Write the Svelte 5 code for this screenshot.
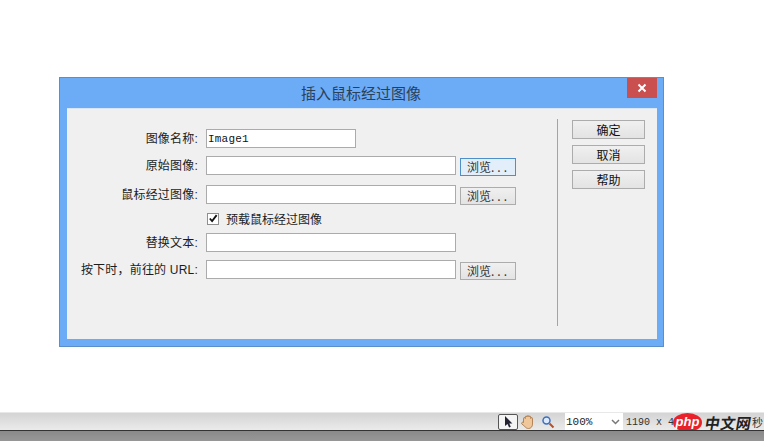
<script>
  const rows = [
    { label: '图像名称:', value: 'Image1', short: true, browse: false },
    { label: '原始图像:', value: '', browse: true, focus: true },
    { label: '鼠标经过图像:', value: '', browse: true },
    { check: '预载鼠标经过图像' },
    { label: '替换文本:', value: '', browse: false },
    { label: '按下时\uFF0C前往的 URL:', value: '', browse: true }
  ];
</script>

<div class="page">
  <section class="dialog">
    <header class="titlebar">
      <h1>插入鼠标经过图像</h1>
      <button class="close" aria-label="关闭">
        <svg width="10" height="10" viewBox="0 0 10 10"><path d="M1.5 1.5l7 7M8.5 1.5l-7 7" stroke="#fff" stroke-width="2" fill="none"/></svg>
      </button>
    </header>
    <div class="body">
      <div class="form">
        {#each rows as r}
          {#if r.check}
            <div class="checkrow">
              <span class="box">
                <svg width="11" height="11" viewBox="0 0 11 11"><path d="M2 5.500l2.500 2.800L9.500 1.800" stroke="#111" stroke-width="2" fill="none"/></svg>
              </span>
              <span>{r.check}</span>
            </div>
          {:else}
            <div class="row">
              <span class="label">{r.label}</span>
              <span class="input" class:short={r.short}>{r.value}</span>
              {#if r.browse}<button class="browse" class:focus={r.focus}>浏览<span class="dots">...</span></button>{/if}
            </div>
          {/if}
        {/each}
      </div>
      <div class="divider"></div>
      <div class="actions">
        <button>确定</button>
        <button>取消</button>
        <button>帮助</button>
      </div>
    </div>
  </section>

  <footer class="status">
    <div class="tools">
      <span class="tool active">
        <svg width="12" height="14" viewBox="0 0 12 14"><path d="M3 1v10l2.500-2 1.600 3.600 1.700-.8L7.300 8.400H10.400z" fill="#223"/></svg>
      </span>
      <span class="tool">
        <svg width="16" height="16" viewBox="0 0 16 16"><path d="M3.500 8.500V4.500a.9.9 0 0 1 1.800 0V3a.9.9 0 0 1 1.800 0v-.5a.9.9 0 0 1 1.800 0V3a.9.9 0 0 1 1.800 0v1.500a.9.9 0 0 1 1.800 0v5.500c0 2.800-1.700 4.500-4 4.500-1.800 0-2.900-.8-3.800-2.200L1.700 9.800c-.7-1.100.9-2.200 1.800-1.300z" fill="#f0c79a" stroke="#a5713f" stroke-width=".8"/></svg>
      </span>
      <span class="tool">
        <svg width="14" height="14" viewBox="0 0 14 14"><circle cx="5.500" cy="5.500" r="3.500" fill="#dbe9fa" stroke="#3c6fc0" stroke-width="1.500"/><path d="M8.500 8.500l4 4" stroke="#b5502a" stroke-width="2"/></svg>
      </span>
    </div>
    <div class="zoom"><span>100%</span><svg width="9" height="6" viewBox="0 0 9 6"><path d="M1 1l3.500 3.500L8 1" stroke="#777" stroke-width="1.500" fill="none"/></svg></div>
    <span class="size">1190 x 4</span>
    <span class="secs">秒</span>
    <div class="mark"><span class="php">php</span><span class="cn">中文网</span></div>
  </footer>
  <div class="bottom"></div>
</div>

<style>
  :global(body) { margin: 0; background: #fff; }
  .page { width: 764px; height: 441px; position: relative; overflow: hidden; padding-top: 77px; box-sizing: border-box; font-family: "Liberation Sans", "Noto Sans CJK SC", sans-serif; font-size: 12px; color: #1c1c1c; }
  .dialog { margin-left: 59px; width: 605px; height: 270px; box-sizing: border-box; background: #6cabf6; border: 1px solid #5a8fca; padding: 0 6px 7px 7px; display: flex; flex-direction: column; }
  .titlebar { height: 30px; flex: none; display: flex; justify-content: center; align-items: center; position: relative; }
  h1 { margin: 0 2px 1px 0; font-size: 15px; font-weight: 400; color: #2b3f56; font-family: "Noto Sans CJK SC", sans-serif; }
  .close { position: absolute; right: 0; top: 0; width: 30px; height: 20px; padding: 0; border: 0; background: #c9504f; display: flex; align-items: center; justify-content: center; }
  .body { flex: 1; background: #f0f0f0; display: flex; border: 1px solid #d7e5f5; border-width: 1px 0 0; }
  .form { width: 449px; padding: 20px 0 0 0; display: flex; flex-direction: column; flex: none; }
  .row { display: flex; align-items: flex-start; height: 19px; margin-bottom: 8px; }
  .row:nth-child(2) { margin-bottom: 10px; }
  .row:nth-child(3) { margin-bottom: 0; }
  .row:nth-child(5) { margin-bottom: 8px; }
  .label { width: 131px; flex: none; text-align: right; line-height: 21px; margin-right: 8px; letter-spacing: .2px; white-space: nowrap; }
  .input { display: block; width: 250px; height: 19px; box-sizing: border-box; background: #fff; border: 1px solid #ababab; font: 11px/18px "Liberation Mono", monospace; letter-spacing: .2px; padding-left: 1px; color: #111; flex: none; }
  .input.short { width: 150px; }
  button { font-family: "Noto Sans CJK SC", sans-serif; font-size: 12px; color: #222; }
  .browse { width: 56px; height: 18px; margin: 2px 0 0 4px; padding: 0 0 0 1px; box-sizing: border-box; border: 1px solid #acacac; background: linear-gradient(#f0f0f0, #e3e3e3); line-height: 16px; flex: none; color: #333; }
  .dots { letter-spacing: 3px; }
  .browse.focus { border-color: #4f8fc9; background: #e2effa; }
  .checkrow { display: flex; align-items: center; height: 29px; padding-left: 140px; gap: 7px; }
  .box { width: 12px; height: 12px; box-sizing: border-box; background: #fff; border: 1px solid #8f8f8f; display: flex; align-items: center; justify-content: center; flex: none; }
  .divider { width: 1px; height: 207px; margin: 10px 0 0 41px; background: #a4a4a4; flex: none; }
  .actions { display: flex; flex-direction: column; gap: 6px; padding: 11px 0 0 14px; }
  .actions button { width: 73px; height: 19px; padding: 0; box-sizing: border-box; border: 1px solid #acacac; background: linear-gradient(#f0f0f0, #e3e3e3); line-height: 17px; color: #111; }
  .status { position: absolute; left: 0; right: 0; top: 412px; height: 19px; box-sizing: border-box; background: linear-gradient(#d4d4d4, #ececec); border-top: 1px solid #e8e8e8; display: flex; align-items: center; padding-left: 498px; }
  .tools { display: flex; align-items: center; width: 67px; }
  .tool { width: 20px; height: 16px; display: flex; align-items: center; justify-content: center; box-sizing: border-box; }
  .tool.active { border: 1px solid #555; border-radius: 2px; background: #f4f4f4; }
  .zoom { width: 58px; height: 18px; background: #fff; box-sizing: border-box; display: flex; align-items: center; justify-content: space-between; padding: 0 3px 0 1px; font: 11px "Liberation Mono", monospace; color: #222; }
  .size { margin-left: 3px; font: 10px "Liberation Mono", monospace; color: #333; white-space: nowrap; }
  .secs { position: absolute; left: 752px; top: 1px; font-size: 11px; color: #333; }
  .mark { position: absolute; left: 673px; top: 0; display: flex; align-items: center; gap: 3px; }
  .php { width: 29px; height: 19px; border-radius: 50%; background: #e8212b; color: #fff; font: italic 700 13px/17px "Liberation Sans", sans-serif; text-align: center; }
  .cn { font: 700 15px/18px "Noto Sans CJK SC", sans-serif; color: #222; display: inline-block; transform: skewX(-10deg); white-space: nowrap; letter-spacing: .5px; }
  .bottom { position: absolute; left: 0; right: 0; top: 430px; height: 11px; background: linear-gradient(#8a8a8a, #979797); border-top: 1px solid #333; box-sizing: border-box; }
</style>
